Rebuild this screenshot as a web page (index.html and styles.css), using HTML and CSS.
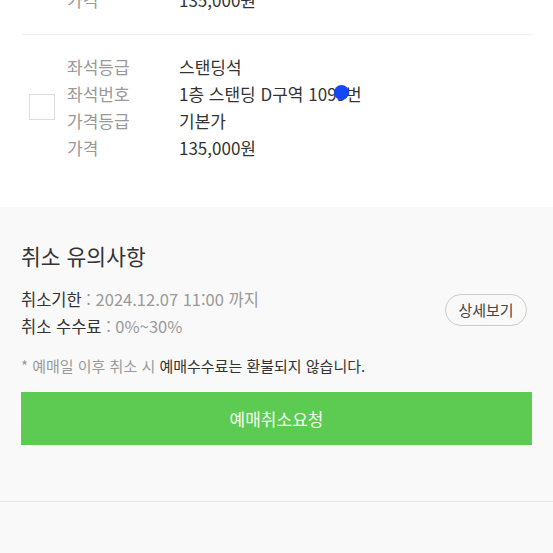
FILE: index.html
```html
<!DOCTYPE html>
<html lang="ko">
<head>
  <meta charset="UTF-8">
  <meta name="viewport" content="width=device-width, initial-scale=1.0">
  <title>예매취소</title>
  <link rel="stylesheet" href="styles.css">
</head>
<body>
  <div class="ticket-list">
    <div class="ticket top-cut">
      <span class="check"></span>
      <dl class="info">
        <div class="row"><dt>좌석등급</dt><dd>스탠딩석</dd></div>
        <div class="row"><dt>좌석번호</dt><dd>1층 스탠딩 D구역 1098번</dd></div>
        <div class="row"><dt>가격등급</dt><dd>기본가</dd></div>
        <div class="row"><dt>가격</dt><dd>135,000원</dd></div>
      </dl>
    </div>

    <div class="ticket">
      <span class="check"></span>
      <dl class="info">
        <div class="row"><dt>좌석등급</dt><dd>스탠딩석</dd></div>
        <div class="row"><dt>좌석번호</dt><dd>1층 스탠딩 D구역 10<span class="masked">99<i class="dot"></i></span>번</dd></div>
        <div class="row"><dt>가격등급</dt><dd>기본가</dd></div>
        <div class="row"><dt>가격</dt><dd>135,000원</dd></div>
      </dl>
    </div>
  </div>

  <section class="notice">
    <h2>취소 유의사항</h2>
    <div class="terms">
      <div class="term-lines">
        <p><strong>취소기한</strong><span> : 2024.12.07 11:00 까지</span></p>
        <p><strong>취소 수수료</strong><span> : 0%~30%</span></p>
      </div>
      <button class="btn-detail">상세보기</button>
    </div>
    <p class="caution">* 예매일 이후 취소 시 <b>예매수수료는 환불되지 않습니다.</b></p>
    <button class="btn-cancel">예매취소요청</button>
  </section>

  <div class="bottom"></div>
</body>
</html>
```

FILE: styles.css
```css
/* page */
body {
  margin: 0;
  font-family: 'Noto Sans CJK KR', 'Noto Sans', sans-serif;
  background-color: #f9f9f9;
  color: #333;
}

.ticket-list {
  background-color: #fff;
  padding: 0 21px 25px 22px;
}

.ticket {
  display: flex;
  align-items: center;
  padding: 18px 0 21px;
}

.ticket.top-cut {
  margin-top: -113px;
  border-bottom: 1px solid #efefef;
}

.check {
  width: 24px;
  height: 24px;
  border: 1px solid #ddd;
  background-color: #fff;
  margin-left: 7px;
  margin-right: 12px;
  flex-shrink: 0;
}

.info {
  margin: 0;
  font-size: 17px;
  line-height: 27px;
}

.row {
  display: flex;
}

.row dt {
  width: 112px;
  color: #999;
}

.row dd {
  margin: 0;
  color: #333;
}

.masked {
  position: relative;
}

.dot {
  position: absolute;
  left: 7px;
  top: 4px;
  width: 15px;
  height: 15px;
  border-radius: 50%;
  background-color: #1447f5;
}

/* notice */
.notice {
  padding: 35px 21px 56px;
  border-bottom: 1px solid #e6e6e6;
}

.notice h2 {
  margin: 0;
  font-size: 21.5px;
  font-weight: normal;
  line-height: 28px;
  color: #333;
}

.terms {
  display: flex;
  align-items: center;
  justify-content: space-between;
  margin-top: 16px;
}

.term-lines p {
  margin: 0;
  font-size: 16.5px;
  line-height: 27px;
}

.term-lines strong {
  font-weight: normal;
  color: #333;
}

.term-lines span {
  color: #999;
}

.btn-detail {
  width: 82px;
  height: 32px;
  margin-right: 5px;
  margin-top: -7px;
  border: 1px solid #ccc;
  border-radius: 16px;
  background-color: #f9f9f9;
  font-family: inherit;
  font-size: 15px;
  color: #444;
  padding: 0;
}

.caution {
  margin: 16px 0 0;
  font-size: 15px;
  line-height: 20px;
  color: #999;
}

.caution b {
  font-weight: normal;
  color: #333;
}

.btn-cancel {
  display: block;
  width: 100%;
  height: 53px;
  margin-top: 16px;
  border: none;
  background-color: #5dcb52;
  color: #f4fff2;
  font-family: inherit;
  font-size: 17px;
}

.bottom {
  height: 60px;
}
```
